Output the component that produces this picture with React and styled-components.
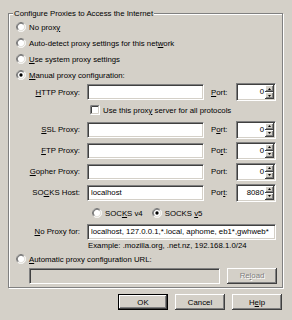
import styled, { createGlobalStyle } from 'styled-components';

const GlobalStyle = createGlobalStyle`
  html, body {
    margin: 0;
    padding: 0;
    background: #d4d0c8;
  }
  body {
    font-family: "Liberation Sans", Arial, sans-serif;
    font-size: 7.8px;
    color: #000;
  }
`;

const Dialog = styled.div`
  width: 292px;
  height: 320px;
  box-sizing: border-box;
  padding: 13px 9px 0 8px;
  display: flex;
  flex-direction: column;
`;

const Group = styled.div`
  position: relative;
  height: 275px;
  box-sizing: border-box;
  border: 1px solid #808080;
  box-shadow: inset 1px 1px 0 #fff, 1px 1px 0 #fff;
  padding: 5px 0 0 7px;
  display: flex;
  flex-direction: column;
`;

const Legend = styled.div`
  position: absolute;
  top: -6px;
  left: 4px;
  padding: 0 1px;
  line-height: 11px;
  background: #d4d0c8;
`;

const Row = styled.div`
  height: ${p => p.$h}px;
  display: flex;
  align-items: center;
  padding-left: ${p => p.$indent || 0}px;
  gap: ${p => p.$gap ?? 3}px;
  white-space: nowrap;
`;

const Option = styled.label`
  display: flex;
  align-items: center;
  gap: 3px;
`;

const U = styled.span`
  text-decoration: underline;
  text-underline-offset: 1px;
`;

const FieldLabel = styled.div`
  width: 71px;
  box-sizing: border-box;
  padding-right: 7px;
  text-align: right;
`;

const PortLabel = styled.div`
  width: 32px;
  box-sizing: border-box;
  padding-left: 7px;
`;

const Field = styled.input`
  width: ${p => p.$w}px;
  height: 16px;
  box-sizing: border-box;
  margin: 0;
  padding: 0 3px;
  font: inherit;
  color: #000;
  background: ${p => (p.disabled ? '#d4d0c8' : '#fff')};
  border: 1px solid;
  border-color: #808080 #fff #fff #808080;
  box-shadow: inset 1px 1px 0 #404040, inset -1px -1px 0 #d4d0c8;
  outline: none;
`;

const Spin = styled.div`
  width: 40px;
  height: 18px;
  box-sizing: border-box;
  border: 1px solid;
  border-color: #808080 #fff #fff #808080;
  box-shadow: inset 1px 1px 0 #404040, inset -1px -1px 0 #d4d0c8;
  background: #fff;
  display: flex;
  padding: 1px;
`;

const SpinValue = styled.div`
  flex: 1;
  text-align: right;
  padding-right: 1px;
  line-height: 14px;
`;

const SpinButtons = styled.div`
  width: 9px;
  display: flex;
  flex-direction: column;
`;

const SpinButton = styled.div`
  flex: 1;
  background: #d4d0c8;
  box-shadow: inset -1px -1px 0 #404040, inset 1px 1px 0 #fff, inset -2px -2px 0 #808080;
  display: flex;
  align-items: center;
  justify-content: center;
`;

const Button = styled.button`
  width: 50px;
  height: 16px;
  box-sizing: border-box;
  margin: 0;
  padding: 0;
  font: inherit;
  color: ${p => (p.disabled ? '#808080' : '#000')};
  text-shadow: ${p => (p.disabled ? '1px 1px 0 #fff' : 'none')};
  background: #d4d0c8;
  border: ${p => (p.$default ? '1px solid #000' : 'none')};
  box-shadow: inset -1px -1px 0 #404040, inset 1px 1px 0 #fff, inset -2px -2px 0 #808080;
`;

const Example = styled.div`
  height: 12px;
  line-height: 12px;
  padding-left: 72px;
`;

const ButtonBar = styled.div`
  margin-top: 6px;
  margin-right: 1px;
  display: flex;
  justify-content: flex-end;
  gap: 7px;
`;

function Radio({ checked }) {
  return (
    <svg width="10" height="10" viewBox="0 0 12 12">
      <circle cx="6" cy="6" r="5.5" fill="#fff" />
      <path d="M2.1 9.9A5.5 5.5 0 0 1 9.9 2.1" fill="none" stroke="#808080" />
      <path d="M9.9 2.1A5.5 5.5 0 0 1 2.1 9.9" fill="none" stroke="#fff" />
      <path d="M2.8 9.2A4.5 4.5 0 0 1 9.2 2.8" fill="none" stroke="#404040" />
      <path d="M9.2 2.8A4.5 4.5 0 0 1 2.8 9.2" fill="none" stroke="#d4d0c8" />
      {checked && <circle cx="6" cy="6" r="2" fill="#000" />}
    </svg>
  );
}

function Checkbox() {
  return (
    <svg width="10" height="10" viewBox="0 0 10 10">
      <rect x="0" y="0" width="10" height="10" fill="#fff" />
      <path d="M0.5 9.5V0.5H9.5" fill="none" stroke="#808080" />
      <path d="M1.5 8.5V1.5H8.5" fill="none" stroke="#404040" />
      <path d="M0.5 9.5H9.5V0.5" fill="none" stroke="#fff" />
      <path d="M1.5 8.5H8.5V1.5" fill="none" stroke="#d4d0c8" />
    </svg>
  );
}

function Arrow({ down }) {
  return (
    <svg width="3" height="2" viewBox="0 0 3 2">
      <polygon points={down ? '0,0 3,0 1.5,2' : '1.5,0 3,2 0,2'} fill="#000" />
    </svg>
  );
}

function Choice({ checked, box, children }) {
  return (
    <Option>
      {box ? <Checkbox /> : <Radio checked={checked} />}
      <span>{children}</span>
    </Option>
  );
}

function PortSpin({ value }) {
  return (
    <Spin>
      <SpinValue>{value}</SpinValue>
      <SpinButtons>
        <SpinButton><Arrow /></SpinButton>
        <SpinButton><Arrow down /></SpinButton>
      </SpinButtons>
    </Spin>
  );
}

function ProxyRow({ h, label, value, port, portLabel }) {
  return (
    <Row $h={h} $gap={0}>
      <FieldLabel>{label}</FieldLabel>
      <Field $w={117} readOnly defaultValue={value} />
      <PortLabel>{portLabel}</PortLabel>
      <PortSpin value={port} />
    </Row>
  );
}

export default function App() {
  return (
    <>
      <GlobalStyle />
      <Dialog>
        <Group>
          <Legend>Configure Proxies to Access the Internet</Legend>
          <Row $h={16}>
            <Choice>No prox<U>y</U></Choice>
          </Row>
          <Row $h={16}>
            <Choice>Auto-detect proxy settings for this net<U>w</U>ork</Choice>
          </Row>
          <Row $h={16}>
            <Choice><U>U</U>se system proxy settings</Choice>
          </Row>
          <Row $h={16}>
            <Choice checked><U>M</U>anual proxy configuration:</Choice>
          </Row>
          <ProxyRow h={18} label={<><U>H</U>TTP Proxy:</>} value="" port="0" portLabel={<><U>P</U>ort:</>} />
          <Row $h={18} $indent={74}>
            <Choice box>Use this prox<U>y</U> server for all protocols</Choice>
          </Row>
          <ProxyRow h={21} label={<><U>S</U>SL Proxy:</>} value="" port="0" portLabel={<>P<U>o</U>rt:</>} />
          <ProxyRow h={21} label={<><U>F</U>TP Proxy:</>} value="" port="0" portLabel={<>Po<U>r</U>t:</>} />
          <ProxyRow h={21} label={<><U>G</U>opher Proxy:</>} value="" port="0" portLabel="Port:" />
          <ProxyRow h={21} label={<>SO<U>C</U>KS Host:</>} value="localhost" port="8080" portLabel={<>Por<U>t</U>:</>} />
          <Row $h={20} $indent={76} $gap={9}>
            <Choice>SOC<U>K</U>S v4</Choice>
            <Choice checked>SOCKS <U>v</U>5</Choice>
          </Row>
          <Row $h={17} $gap={0}>
            <FieldLabel><U>N</U>o Proxy for:</FieldLabel>
            <Field $w={189} readOnly defaultValue="localhost, 127.0.0.1,*.local, aphome, eb1*,gwhweb*" />
          </Row>
          <Example>Example: .mozilla.org, .net.nz, 192.168.1.0/24</Example>
          <Row $h={14}>
            <Choice><U>A</U>utomatic proxy configuration URL:</Choice>
          </Row>
          <Row $h={19} $indent={13} $gap={7}>
            <Field $w={191} disabled readOnly defaultValue="" />
            <Button disabled>Re<U>l</U>oad</Button>
          </Row>
        </Group>
        <ButtonBar>
          <Button $default>OK</Button>
          <Button>Cancel</Button>
          <Button>H<U>e</U>lp</Button>
        </ButtonBar>
      </Dialog>
    </>
  );
}
